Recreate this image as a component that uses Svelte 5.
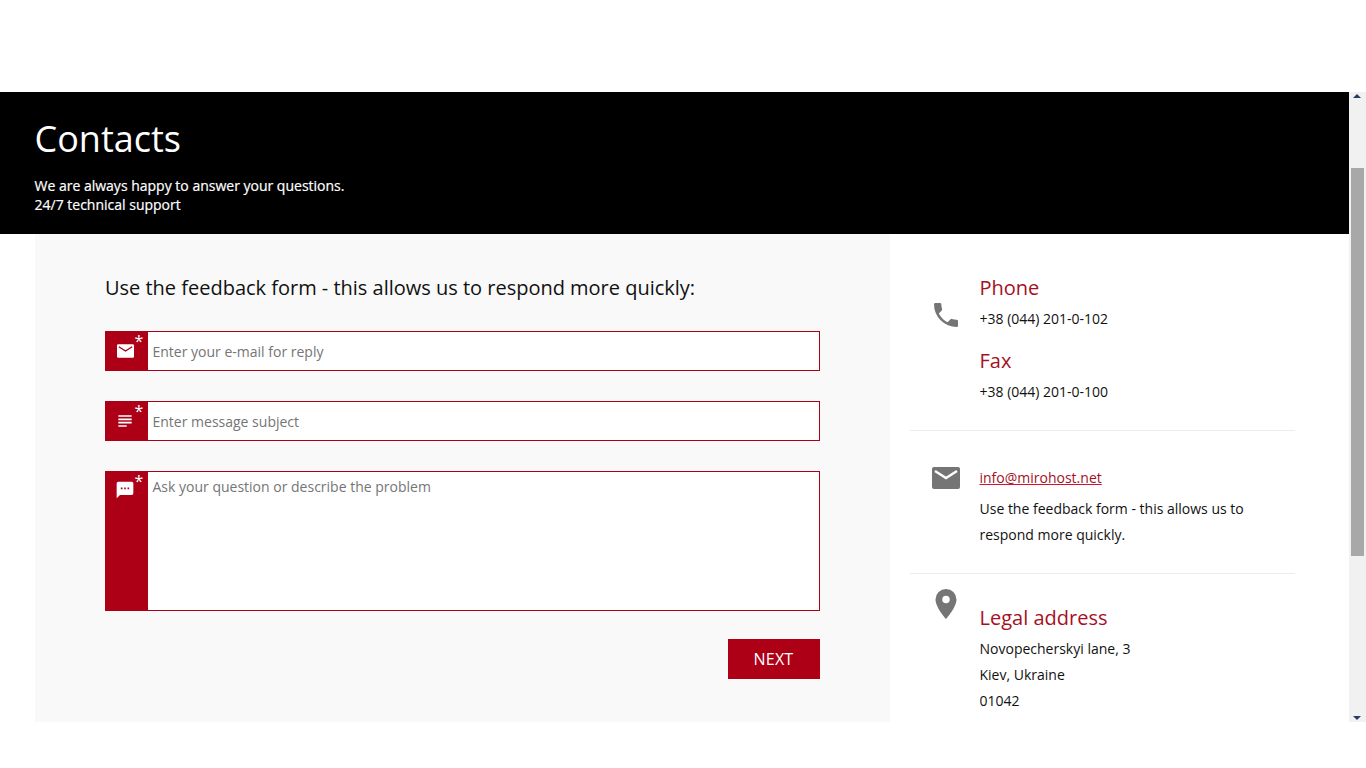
<script lang="ts">
	const phone = 'M6.62 10.79a15.15 15.15 0 0 0 6.59 6.59l2.2-2.2a1 1 0 0 1 1.02-.24 11.4 11.4 0 0 0 3.57.57 1 1 0 0 1 1 1V20a1 1 0 0 1-1 1A17 17 0 0 1 3 4a1 1 0 0 1 1-1h3.5a1 1 0 0 1 1 1c0 1.25.2 2.45.57 3.57a1 1 0 0 1-.25 1.02l-2.2 2.2z';
	const subject = 'M14 17H4v2h10v-2zm6-8H4v2h16V9zM4 15h16v-2H4v2zM4 5v2h16V5H4z';
	const sms = 'M20 2H4a2 2 0 0 0-2 2v18l4-4h14a2 2 0 0 0 2-2V4a2 2 0 0 0-2-2zM9 11H7V9h2v2zm4 0h-2V9h2v2zm4 0h-2V9h2v2z';
	const place = 'M12 2a7 7 0 0 0-7 7c0 5.25 7 13 7 13s7-7.75 7-13a7 7 0 0 0-7-7zm0 9.5a2.5 2.5 0 1 1 0-5 2.5 2.5 0 0 1 0 5z';
</script>

<div class="page">
	<div class="frame">
		<div class="content">
			<header class="hero">
				<h1>Contacts</h1>
				<p>We are always happy to answer your questions.<br />24/7 technical support</p>
			</header>

			<div class="columns">
				<section class="feedback">
					<h2>Use the feedback form - this allows us to respond more quickly:</h2>

					<div class="field">
						<span class="field-icon">
							<svg class="envelope" width="17" height="14" viewBox="0 0 28 22">
								<rect width="28" height="22" rx="2" />
								<path d="M3 4 14 11 25 4" />
							</svg>
							<i>*</i>
						</span>
						<input type="text" placeholder="Enter your e-mail for reply" />
					</div>

					<div class="field">
						<span class="field-icon">
							<svg width="20" height="20" viewBox="0 0 24 24"><path d={subject} /></svg>
							<i>*</i>
						</span>
						<input type="text" placeholder="Enter message subject" />
					</div>

					<div class="field field-area">
						<span class="field-icon">
							<svg width="20" height="20" viewBox="0 0 24 24"><path d={sms} /></svg>
							<i>*</i>
						</span>
						<textarea placeholder="Ask your question or describe the problem"></textarea>
					</div>

					<div class="actions">
						<button type="button">NEXT</button>
					</div>
				</section>

				<aside class="info">
					<div class="block block-phone">
						<svg class="icon" width="32" height="32" viewBox="0 0 24 24"><path d={phone} /></svg>
						<div class="body">
							<h3>Phone</h3>
							<p>+38 (044) 201-0-102</p>
							<h3 class="next">Fax</h3>
							<p>+38 (044) 201-0-100</p>
						</div>
					</div>

					<div class="block block-mail">
						<svg class="icon envelope" width="28" height="22" viewBox="0 0 28 22">
							<rect width="28" height="22" rx="2" />
							<path d="M3 4 14 11 25 4" />
						</svg>
						<div class="body">
							<a href="#top">info@mirohost.net</a>
							<p>Use the feedback form - this allows us to respond more quickly.</p>
						</div>
					</div>

					<div class="block block-place">
						<svg class="icon" width="36" height="36" viewBox="0 0 24 24"><path d={place} /></svg>
						<div class="body">
							<h3>Legal address</h3>
							<p>Novopecherskyi lane, 3<br />Kiev, Ukraine<br />01042</p>
						</div>
					</div>
				</aside>
			</div>
		</div>

		<div class="scrollbar">
			<span class="arrow up"></span>
			<span class="thumb"></span>
			<span class="arrow down"></span>
		</div>
	</div>
</div>

<style>
	:global(body) {
		background: #fff;
		font-family: 'Open Sans', sans-serif;
	}

	.page {
		height: 768px;
		padding-top: 92px;
		box-sizing: border-box;
		overflow: hidden;
	}

	.frame {
		display: flex;
		height: 630px;
	}

	.content {
		flex: 1;
		min-width: 0;
		overflow: hidden;
	}

	.hero {
		height: 142px;
		box-sizing: border-box;
		padding: 24px 35px 0 34.5px;
		background: #000;
		color: #fff;
	}

	.hero h1 {
		margin: 0;
		font-size: 36px;
		font-weight: 400;
		line-height: 46px;
	}

	.hero p {
		margin: 14px 0 0;
		font-size: 14px;
		line-height: 19px;
		-webkit-text-stroke: 0.2px #fff;
	}

	.columns {
		display: flex;
		margin-left: 35px;
	}

	.feedback {
		width: 855px;
		height: 488px;
		box-sizing: border-box;
		padding: 39px 70px 0;
		background: #f9f9f9;
	}

	.feedback h2 {
		margin: 0 0 29px;
		font-size: 20px;
		font-weight: 400;
		line-height: 29px;
		letter-spacing: -0.01px;
		color: #111;
	}

	.field {
		display: flex;
		height: 40px;
		margin-bottom: 30px;
		box-sizing: border-box;
		border: 1px solid #ad0017;
		background: #fff;
	}

	.field-area {
		height: 140px;
		margin-bottom: 28px;
	}

	.field-icon {
		position: relative;
		flex: none;
		width: 42px;
		background: #ad0017;
	}

	.field-icon svg {
		position: absolute;
		left: 9px;
		top: 9px;
		fill: #fff;
	}

	.field-icon svg.envelope {
		left: 11px;
		top: 12px;
		--flap: #ad0017;
	}

	.field-area .field-icon svg {
		top: 8px;
	}

	.field-icon i {
		position: absolute;
		left: 28.5px;
		top: 0;
		font-size: 16px;
		font-style: normal;
		line-height: 18px;
		color: #fff;
	}

	.field input,
	.field textarea {
		flex: 1;
		min-width: 0;
		border: 0;
		outline: 0;
		padding: 0 4.5px;
		background: #fff;
		font-family: inherit;
		font-size: 14px;
		color: #222;
		resize: none;
	}

	.field textarea {
		padding-top: 5px;
		line-height: 19px;
	}

	.field input::placeholder,
	.field textarea::placeholder {
		color: #757575;
		opacity: 1;
	}

	.actions {
		display: flex;
		justify-content: flex-end;
	}

	.actions button {
		width: 92px;
		height: 40px;
		padding: 0 1px 0 0;
		border: 0;
		background: #ad0017;
		color: #fff;
		font-family: inherit;
		font-size: 16px;
		letter-spacing: 0.2px;
	}

	.envelope path {
		fill: none;
		stroke: var(--flap, #fff);
		stroke-width: 2.4;
	}

	.info {
		width: 385px;
		margin-left: 20px;
	}

	.block {
		display: flex;
		border-bottom: 1px solid #ececec;
		box-sizing: border-box;
	}

	.block:last-child {
		border-bottom: 0;
	}

	.block-phone {
		height: 197px;
		padding-top: 40px;
	}

	.block-mail {
		height: 143px;
		padding-top: 33px;
	}

	.block-place {
		padding-top: 12px;
	}

	.icon {
		flex: none;
		margin-left: 18px;
		fill: #757575;
	}

	.block-phone .icon {
		margin-left: 20px;
		margin-right: 2px;
		margin-top: 25px;
	}

	.block-mail .icon {
		margin-left: 22px;
		margin-right: 4px;
		margin-top: 3px;
	}

	.body {
		margin-left: 15.5px;
		font-size: 14px;
		line-height: 26px;
		color: #111;
	}

	.block-mail .body {
		margin-top: 1px;
	}

	.body p {
		margin: 0;
		width: 290px;
	}

	.body h3 {
		margin: 0 0 4px;
		font-size: 20px;
		font-weight: 400;
		line-height: 28px;
		color: #a6101f;
	}

	.body h3.next {
		margin-top: 15px;
	}

	.block-place .body {
		padding-top: 18px;
	}

	.body a {
		display: block;
		margin-bottom: 5px;
		color: #a6101f;
		text-decoration-color: #d3122f;
	}

	.scrollbar {
		position: relative;
		flex: none;
		width: 17px;
		background: #f1f1f1;
	}

	.thumb {
		position: absolute;
		left: 2px;
		top: 76px;
		width: 13px;
		height: 388px;
		background: #a8a8a8;
	}

	.arrow {
		position: absolute;
		left: 4px;
		width: 0;
		height: 0;
		border-left: 4px solid transparent;
		border-right: 4px solid transparent;
	}

	.arrow.up {
		top: 2px;
		border-bottom: 4px solid #2c3a63;
	}

	.arrow.down {
		bottom: 2px;
		border-top: 4px solid #2c3a63;
	}
</style>
